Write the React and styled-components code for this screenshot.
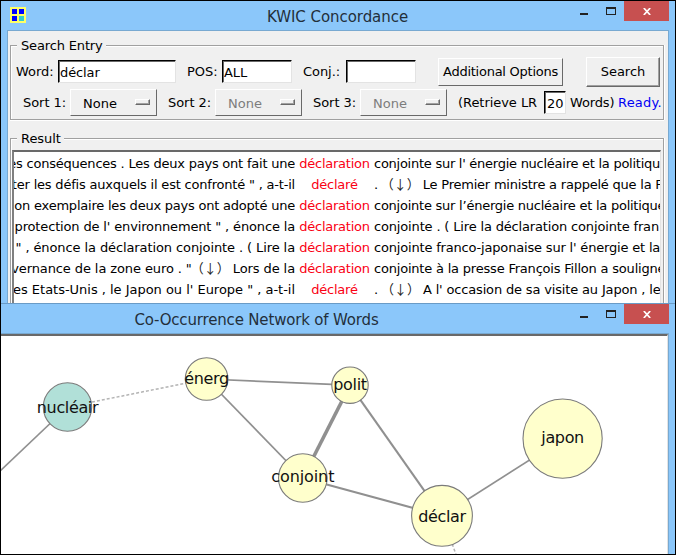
import React from "react";
import styled, { createGlobalStyle } from "styled-components";

const Global = createGlobalStyle`
  * { box-sizing: border-box; }
  body { margin: 0; background: #000; }
`;

const Desktop = styled.main`
  width: 676px;
  height: 555px;
  border: 1px solid #000;
  background: #8bc7fa;
  display: flex;
  flex-direction: column;
  overflow: hidden;
  font: 13px/18px "DejaVu Sans", "Noto Sans CJK JP", sans-serif;
  color: #000;
  white-space: pre;
`;

const ConcordanceWindow = styled.section`
  height: 302px;
  flex: none;
  display: flex;
  flex-direction: column;
  overflow: hidden;
`;

const NetworkWindow = styled.section`
  flex: 1;
  min-height: 0;
  display: flex;
  flex-direction: column;
  border-top: 1px solid #6a9bc6;
`;

const TitleBar = styled.header`
  height: 29px;
  flex: none;
  display: grid;
  grid-template-columns: 1fr auto 1fr;
  padding: 0 6px 0 9px;
`;

const Title = styled.h1`
  margin: 6px 0 0 ${(p) => p.$shift}px;
  font-size: 15px;
  line-height: 20px;
  font-weight: 400;
  letter-spacing: ${(p) => p.$spacing}px;
  color: #232f3a;
`;

const AppIcon = styled.svg`
  width: 16px;
  height: 16px;
  margin-top: 6px;
`;

const Controls = styled.div`
  justify-self: end;
  display: flex;
  align-items: flex-start;
`;

const ControlGlyph = styled.svg`
  width: 44px;
  height: 20px;
`;

const CloseButton = styled.button`
  width: 45px;
  height: 20px;
  padding: 0;
  border: 0;
  background: #c75050;
  display: grid;
  place-items: center;
`;

const Client = styled.div`
  flex: 1;
  min-height: 0;
  margin: 0 6px;
  padding: 7px 3px 0 2px;
  border: solid #78a9d1;
  border-width: 1px 1px 0;
  background: #f0f0f0;
  display: flex;
  flex-direction: column;
`;

const Group = styled.section`
  min-width: 0;
  width: 655px;
  height: ${(p) => p.$height}px;
  flex: none;
  margin: 0 0 11px;
  display: grid;
  grid-template-columns: 7px auto 1fr;
  grid-template-rows: 16px 1fr;
`;

const GroupLabel = styled.span`
  padding: 0 3px 0 4px;
  line-height: 16px;
  letter-spacing: ${(p) => p.$spacing}px;
`;

const GroupRule = styled.i`
  height: 9px;
  align-self: end;
  border-top: 1px solid #a0a0a0;
  border-left: ${(p) => (p.$tail ? 0 : 1)}px solid #a0a0a0;
  border-right: ${(p) => (p.$tail ? 1 : 0)}px solid #a0a0a0;
  box-shadow: ${(p) => (p.$tail ? "inset 0 1px #fff, 1px 0 #fff" : "inset 1px 1px #fff")};
  margin-right: ${(p) => (p.$tail ? 1 : 0)}px;
`;

const GroupBody = styled.div`
  grid-column: 1 / -1;
  min-height: 0;
  margin-right: 1px;
  border: solid #a0a0a0;
  border-width: 0 1px 1px;
  box-shadow: inset 1px 0 #fff, 1px 0 #fff, 0 1px #fff;
`;

const FormRow = styled.div`
  display: flex;
  align-items: center;
  height: ${(p) => p.$height}px;
  padding-left: ${(p) => p.$indent}px;
`;

const Label = styled.label`
  width: ${(p) => p.$width}px;
  flex: none;
  padding-top: ${(p) => p.$drop ?? 0}px;
  letter-spacing: ${(p) => p.$spacing ?? -0.05}px;
`;

const Entry = styled.input`
  width: ${(p) => p.$width}px;
  height: 23px;
  margin: 0 ${(p) => p.$gap}px 1px 0;
  padding: 2px 0 0 ${(p) => p.$pad ?? 1}px;
  flex: none;
  border: 1px solid;
  border-color: #000 #e3e3e3 #e3e3e3 #000;
  border-radius: 0;
  box-shadow: inset 1px 1px #696969;
  outline: 0;
  background: #fff;
  color: #000;
  font: inherit;
  letter-spacing: -0.1px;
`;

const PushButton = styled.button`
  width: ${(p) => p.$width}px;
  height: ${(p) => p.$height}px;
  margin-right: ${(p) => p.$gap}px;
  flex: none;
  padding: 0;
  border: 1px solid;
  border-color: #fff #696969 #696969 #fff;
  box-shadow: ${(p) => (p.$raised ? "inset -1px -1px #a0a0a0" : "none")};
  background: #f0f0f0;
  color: #000;
  font: inherit;
  letter-spacing: ${(p) => p.$spacing}px;
`;

const MenuButton = styled.button`
  width: 87px;
  height: 27px;
  margin-right: ${(p) => p.$gap}px;
  padding: 2px 6px 0 12px;
  flex: none;
  display: flex;
  align-items: center;
  justify-content: space-between;
  border: 1px solid;
  border-color: #fff #696969 #696969 #fff;
  background: #f0f0f0;
  color: ${(p) => (p.disabled ? "#7d7d7d" : "#000")};
  font: inherit;
`;

const MenuMark = styled.i`
  width: 15px;
  height: 6px;
  margin-bottom: 4px;
  border: 1px solid;
  border-color: #fff #696969 #696969 #fff;
  box-shadow: inset -1px -1px #a0a0a0;
`;

const Status = styled.span`
  padding-top: 1px;
  color: #0000f5;
  letter-spacing: 0.2px;
`;

const ResultList = styled.div`
  height: 170px;
  margin: 3px 2px 0 1px;
  padding-top: 1px;
  border: solid;
  border-width: 2px 1px 0 2px;
  border-color: #696969 #e3e3e3 #696969 #808080;
  background: #fff;
  overflow: hidden;
`;

const ResultRow = styled.div`
  display: grid;
  grid-template-columns: 281px 79px 287px;
  height: 21px;
  line-height: 22px;
`;

const Context = styled.span`
  display: flex;
  justify-content: ${(p) => (p.$before ? "flex-end" : "flex-start")};
  overflow: hidden;
  letter-spacing: ${(p) => p.$spacing}px;
`;

const Keyword = styled.span`
  text-align: center;
  color: #fa0014;
  letter-spacing: -0.25px;
`;

const LineBreak = styled.span`
  margin: 0 -1px;
  font-family: "Noto Sans CJK JP", sans-serif;
  line-height: 0;
  letter-spacing: 0;
  color: #222;
`;

const NetworkFrame = styled.div`
  flex: 1;
  min-height: 0;
  width: 668px;
  display: flex;
  border-right: 1px solid #78a9d1;
  border-top: 1px solid #78a9d1;
`;

const NetworkCanvas = styled.svg`
  display: block;
  flex: 1;
  min-height: 0;
  width: 667px;
  border-top: 2px solid #696969;
  border-right: 1px solid #e3e3e3;
  background: #fff;
`;

const NodeText = styled.text`
  font: 16px "DejaVu Sans", sans-serif;
  letter-spacing: ${(p) => p.$spacing}px;
  text-anchor: middle;
  fill: #111;
`;

const sorts = [
  ["Sort 1:", false, 11],
  ["Sort 2:", true, 11],
  ["Sort 3:", true, 11],
];

const MARK = "（↓）";

const results = [
  ["es conséquences . Les deux pays ont fait une", "déclaration", "conjointe sur l' énergie nucléaire et la politique", -0.22, -0.26],
  ["ter les défis auxquels il est confronté \" , a-t-il", "déclaré", `. ${MARK} Le Premier ministre a rappelé que la F`, -0.2, -0.22],
  ["on exemplaire les deux pays ont adopté une", "déclaration", "conjointe sur l’énergie nucléaire et la politique", -0.22, -0.24],
  ["protection de l' environnement \" , énonce la", "déclaration", "conjointe . ( Lire la déclaration conjointe fran", -0.15, -0.16],
  ["\" , énonce la déclaration conjointe . ( Lire la", "déclaration", "conjointe franco-japonaise sur l' énergie et la", -0.1, -0.18],
  [`vernance de la zone euro . "${MARK} Lors de la`, "déclaration", "conjointe à la presse François Fillon a souligné", -0.1, -0.2],
  ["es Etats-Unis , le Japon ou l' Europe \" , a-t-il", "déclaré", `. ${MARK} A l' occasion de sa visite au Japon , le`, -0.02, -0.16],
];

const nodes = [
  { label: "nucléair", x: 67.5, y: 407, r: 24.2, fill: "#b1e0d8", drop: 5.5 },
  { label: "énerg", x: 206.6, y: 379, r: 21.3, drop: 4.5 },
  { label: "polit", x: 350, y: 385.2, r: 18.2, drop: 5 },
  { label: "conjoint", x: 302.8, y: 478, r: 24.3, drop: 3.5, spacing: -0.1 },
  { label: "japon", x: 562.6, y: 438.6, r: 39.6, drop: 4.2 },
  { label: "déclar", x: 442, y: 515.8, r: 30.4, drop: 6 },
];

const edges = [
  { from: [67.5, 407], to: [0, 471], width: 1.7 },
  { from: [206.6, 379], to: [350, 385.2], width: 1.7 },
  { from: [206.6, 379], to: [302.8, 478], width: 1.7 },
  { from: [350, 385.2], to: [302.8, 478], width: 3.6 },
  { from: [350, 385.2], to: [442, 515.8], width: 2.1 },
  { from: [302.8, 478], to: [442, 515.8], width: 2.1 },
  { from: [442, 515.8], to: [563.2, 438.6], width: 1.7 },
  { from: [67.5, 407], to: [206.6, 379], width: 1.5, dotted: true },
  { from: [442, 515.8], to: [458, 560], width: 1.5, dotted: true },
];

function WindowControls() {
  return (
    <Controls>
      <ControlGlyph viewBox="0 0 44 20" shapeRendering="crispEdges" aria-hidden="true">
        <path d="M0 12h8v2H0z" fill="#222" />
        <path d="M26 6h10v8H26zM27 8v5h8V8z" fill="#222" fillRule="evenodd" />
      </ControlGlyph>
      <CloseButton aria-label="Close">
        <svg width="8" height="7" viewBox="0 0 8 7" aria-hidden="true">
          <path d="M.8 0L7.2 7M7.2 0L.8 7" stroke="#fff" strokeWidth="1.7" />
        </svg>
      </CloseButton>
    </Controls>
  );
}

function GroupBox({ label, height, spacing, children }) {
  return (
    <Group $height={height}>
      <GroupRule />
      <GroupLabel $spacing={spacing}>{label}</GroupLabel>
      <GroupRule $tail />
      <GroupBody>{children}</GroupBody>
    </Group>
  );
}

function ContextText({ text, ...rest }) {
  const [head, tail] = text.split(MARK);
  return (
    <Context {...rest}>
      <span>
        {head}
        {tail !== undefined && <LineBreak>{MARK}</LineBreak>}
        {tail}
      </span>
    </Context>
  );
}

export default function App() {
  return (
    <Desktop>
      <Global />
      <ConcordanceWindow>
        <TitleBar>
          <AppIcon viewBox="0 0 16 16" shapeRendering="crispEdges" aria-hidden="true">
            <path d="M0 0h16v16H0z" fill="#ffff66" />
            <path d="M2 2h5v5H2zM9 2h5v5H9zM2 9h5v5H2z" fill="#0000fe" />
            <path d="M9 9h5v5H9z" fill="#33cccc" />
          </AppIcon>
          <Title $shift={-4} $spacing={-0.05}>KWIC Concordance</Title>
          <WindowControls />
        </TitleBar>
        <Client>
          <GroupBox label="Search Entry" height={82} spacing={-0.15}>
            <FormRow $height={36} $indent={5}>
              <Label $width={42}>Word:</Label>
              <Entry $width={118} $gap={11} defaultValue="déclar" aria-label="Word" />
              <Label $width={35}>POS:</Label>
              <Entry $width={70} $gap={11} defaultValue="ALL" aria-label="POS" />
              <Label $width={43}>Conj.:</Label>
              <Entry $width={70} $gap={22} aria-label="Conj." />
              <PushButton $width={125} $height={28} $gap={23} $spacing={-0.25}>Additional Options</PushButton>
              <PushButton $width={74} $height={30} $gap={0} $spacing={0} $raised>Search</PushButton>
            </FormRow>
            <FormRow $height={25} $indent={12}>
              {sorts.map(([label, disabled, gap]) => (
                <React.Fragment key={label}>
                  <Label $width={47} $drop={1}>{label}</Label>
                  <MenuButton disabled={disabled} $gap={gap}>
                    None
                    <MenuMark />
                  </MenuButton>
                </React.Fragment>
              ))}
              <Label $width={86} $drop={1}>(Retrieve LR</Label>
              <Entry $width={22} $gap={4} $pad={2} defaultValue="20" aria-label="Words to retrieve" />
              <Label $width={48} $spacing={-0.15} $drop={1}>Words)</Label>
              <Status>Ready.</Status>
            </FormRow>
          </GroupBox>
          <GroupBox label="Result" height={190} spacing={-0.05}>
            <ResultList>
              {results.map(([before, word, after, beforeSpacing, afterSpacing], i) => (
                <ResultRow key={i}>
                  <ContextText $before text={before} $spacing={beforeSpacing} />
                  <Keyword>{word}</Keyword>
                  <ContextText text={after} $spacing={afterSpacing} />
                </ResultRow>
              ))}
            </ResultList>
          </GroupBox>
        </Client>
      </ConcordanceWindow>
      <NetworkWindow>
        <TitleBar>
          <span />
          <Title $shift={-166} $spacing={-0.17}>Co-Occurrence Network of Words</Title>
          <WindowControls />
        </TitleBar>
        <NetworkFrame>
          <NetworkCanvas viewBox="1 336 666 218" preserveAspectRatio="xMinYMin slice">
            {edges.map(({ from, to, width, dotted }, i) => (
              <line
                key={i}
                x1={from[0]}
                y1={from[1]}
                x2={to[0]}
                y2={to[1]}
                stroke={dotted ? "#b4b4b4" : "#909090"}
                strokeWidth={width}
                strokeDasharray={dotted ? "3 2" : undefined}
              />
            ))}
            {nodes.map(({ label, x, y, r, drop, fill = "#ffffcc", spacing = -0.35 }) => (
              <g key={label}>
                <circle cx={x} cy={y} r={r} fill={fill} stroke="#7b7b7b" strokeWidth="1.1" />
                <NodeText x={x} y={y + drop} $spacing={spacing}>{label}</NodeText>
              </g>
            ))}
          </NetworkCanvas>
        </NetworkFrame>
      </NetworkWindow>
    </Desktop>
  );
}
